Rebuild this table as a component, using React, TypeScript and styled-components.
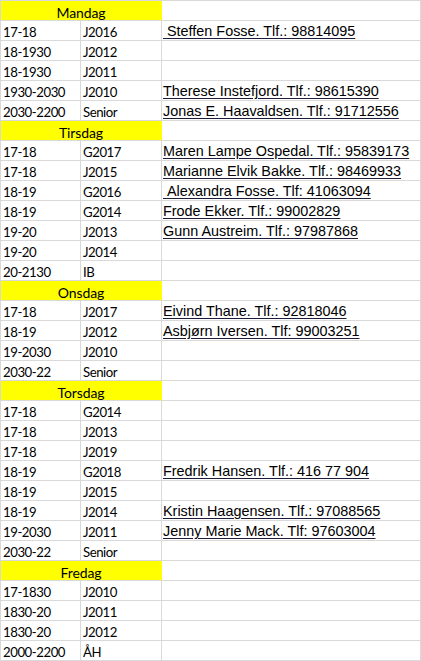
import React, { FC } from 'react';
import styled, { createGlobalStyle } from 'styled-components';

const GlobalStyle = createGlobalStyle`
  html, body {
    margin: 0;
    padding: 0;
    background: #ffffff;
  }
`;

const Sheet = styled.div`
  display: grid;
  grid-template-columns: 80px 81px 259px;
  width: 421px;
  border-left: 1px solid #d9d9d9;
  border-top: 1px solid #d9d9d9;
  box-sizing: border-box;
`;

const Cell = styled.div<{ $link?: boolean }>`
  height: 20px;
  box-sizing: border-box;
  border-right: 1px solid #d9d9d9;
  border-bottom: 1px solid #d9d9d9;
  padding: ${(p) => (p.$link ? '1px 0 0 1px' : '2px 0 0 2px')};
  font-family: ${(p) => (p.$link ? '"Liberation Sans", Arial, sans-serif' : 'Lato, "Open Sans", sans-serif')};
  font-size: ${(p) => (p.$link ? '14.4px' : '13.2px')};
  letter-spacing: ${(p) => (p.$link ? '0' : '-0.45px')};
  line-height: 19px;
  color: #000000;
  white-space: nowrap;
  overflow: hidden;
`;

const Link = styled.span`
  text-decoration: underline;
  text-decoration-color: #1c1c3a;
  text-underline-offset: 2px;
`;

const DayHeader = styled.div`
  grid-column: span 2;
  height: 20px;
  box-sizing: border-box;
  background: #ffff00;
  border-right: 1px solid #ffff00;
  border-bottom: 1px solid #d9d9d9;
  text-align: center;
  padding-top: 2px;
  font-family: Lato, "Open Sans", sans-serif;
  font-size: 14px;
  letter-spacing: -0.1px;
  line-height: 19px;
  color: #000000;
`;

type Row = [string, string, string?];

interface Day {
  name: string;
  rows: Row[];
}

const days: Day[] = [
  {
    name: 'Mandag',
    rows: [
      ['17-18', 'J2016', '\u00a0Steffen Fosse. Tlf.: 98814095'],
      ['18-1930', 'J2012'],
      ['18-1930', 'J2011'],
      ['1930-2030', 'J2010', 'Therese Instefjord. Tlf.: 98615390'],
      ['2030-2200', 'Senior', 'Jonas E. Haavaldsen. Tlf.: 91712556'],
    ],
  },
  {
    name: 'Tirsdag',
    rows: [
      ['17-18', 'G2017', 'Maren Lampe Ospedal. Tlf.: 95839173'],
      ['17-18', 'J2015', 'Marianne Elvik Bakke. Tlf.: 98469933'],
      ['18-19', 'G2016', '\u00a0Alexandra Fosse. Tlf: 41063094'],
      ['18-19', 'G2014', 'Frode Ekker. Tlf.: 99002829'],
      ['19-20', 'J2013', 'Gunn Austreim. Tlf.: 97987868'],
      ['19-20', 'J2014'],
      ['20-2130', 'IB'],
    ],
  },
  {
    name: 'Onsdag',
    rows: [
      ['17-18', 'J2017', 'Eivind Thane. Tlf.: 92818046'],
      ['18-19', 'J2012', 'Asbjørn Iversen. Tlf: 99003251'],
      ['19-2030', 'J2010'],
      ['2030-22', 'Senior'],
    ],
  },
  {
    name: 'Torsdag',
    rows: [
      ['17-18', 'G2014'],
      ['17-18', 'J2013'],
      ['17-18', 'J2019'],
      ['18-19', 'G2018', 'Fredrik Hansen. Tlf.: 416 77 904'],
      ['18-19', 'J2015'],
      ['18-19', 'J2014', 'Kristin Haagensen. Tlf.: 97088565'],
      ['19-2030', 'J2011', 'Jenny Marie Mack. Tlf: 97603004'],
      ['2030-22', 'Senior'],
    ],
  },
  {
    name: 'Fredag',
    rows: [
      ['17-1830', 'J2010'],
      ['1830-20', 'J2011'],
      ['1830-20', 'J2012'],
      ['2000-2200', 'ÅH'],
    ],
  },
];

const App: FC = () => (
  <>
    <GlobalStyle />
    <Sheet>
      {days.map((day) => (
        <React.Fragment key={day.name}>
          <DayHeader>{day.name}</DayHeader>
          <Cell />
          {day.rows.map(([time, group, contact], i) => (
            <React.Fragment key={`${day.name}-${i}`}>
              <Cell>{time}</Cell>
              <Cell>{group}</Cell>
              <Cell $link>{contact && <Link>{contact}</Link>}</Cell>
            </React.Fragment>
          ))}
        </React.Fragment>
      ))}
    </Sheet>
  </>
);

export default App;
